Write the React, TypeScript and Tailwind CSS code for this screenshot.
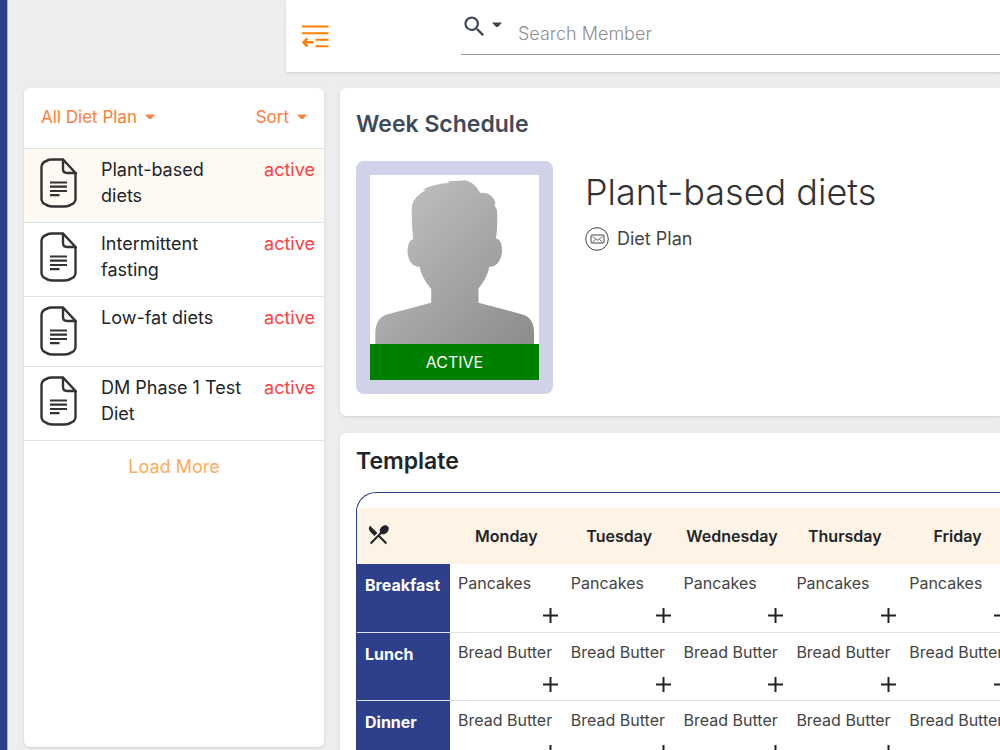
import React, { useState } from 'react';
import { MdRestaurantMenu, MdSearch } from 'react-icons/md';

const plans = [
  { name: 'Plant-based diets', status: 'active' },
  { name: 'Intermittent fasting', status: 'active' },
  { name: 'Low-fat diets', status: 'active' },
  { name: 'DM Phase 1 Test Diet', status: 'active' },
];

const days = ['Monday', 'Tuesday', 'Wednesday', 'Thursday', 'Friday'];

const meals = [
  { name: 'Breakfast', food: 'Pancakes' },
  { name: 'Lunch', food: 'Bread Butter' },
  { name: 'Dinner', food: 'Bread Butter' },
];

const Caret = () => (
  <svg width="10" height="8" viewBox="0 0 10 8" fill="currentColor" aria-hidden="true">
    <path d="M0 .5h10L6.400 4.400Q5 5.600 3.600 4.400z" />
  </svg>
);

const CollapseIcon = () => (
  <svg width="27" height="23" viewBox="0 0 27 23" fill="none" stroke="currentColor" strokeWidth="2" aria-hidden="true">
    <path d="M0 1.600h26.500M0 8.300h26.500M13.500 14.700h13M13.500 21.300h13" />
    <path d="M1 17.300h10.500M5.500 13.300l-4.200 4 4.200 4" strokeWidth="2.400" />
  </svg>
);

const DocumentIcon = () => (
  <svg className="mt-px h-[50px] w-[37px] shrink-0" viewBox="0 0 37 50" fill="none" stroke="#333" aria-hidden="true">
    <path d="M8 2.500Q1.500 4 1.500 9v32q0 4.500 6.500 6.500M29 47.500q6.500-2 6.500-6.500V15" strokeWidth="2.400" />
    <path d="M7 2.300Q9 1.500 12 1.500h11L35.500 15H27q-4 0-4-4V1.500M7 47.300q3 1.200 6 1.200h11q3 0 6-1.200" strokeWidth="2.400" />
    <path d="M10 24.500h17M10 28.700h17M10 33h17M10 37.200h9.500" strokeWidth="2.200" />
  </svg>
);

const MailIcon = () => (
  <svg width="24" height="24" viewBox="0 0 24 24" fill="none" stroke="#444" aria-hidden="true">
    <circle cx="12" cy="12" r="11.300" />
    <rect x="6" y="8" width="13" height="8" rx="1" />
    <path d="M7.500 9.500l5 3.800 5-3.800M7.500 15l3-2.500M17.500 15l-3-2.500" strokeWidth=".8" />
  </svg>
);

const Silhouette = () => (
  <svg className="block aspect-square w-full bg-white" viewBox="0 0 508 508" role="img" aria-label="Profile">
    <defs>
      <linearGradient id="shade" x1="0" y1="0" x2="1" y2="1">
        <stop offset="0" stopColor="#c4c6c5" />
        <stop offset=".55" stopColor="#a4a5a7" />
        <stop offset="1" stopColor="#8c8c8d" />
      </linearGradient>
    </defs>
    <path
      fill="url(#shade)"
      d="M16 508v-37q2-42 35-52l133-35v-41q-29-34-35-67c-20 2-36-20-36-46 0-24 7-36 17-37q-6-50-4-102 8-28 42-46l-10-1q28-17 80-21l-4-4q25 0 52-3 28 5 45 38 38-4 46 32l-3 4 8 16q2 45-3 85c12 2 18 17 18 35 0 28-17 52-38 50q-7 35-33 65v43l133 35q33 10 34 52v37z"
    />
  </svg>
);

const App = () => {
  const [selected, setSelected] = useState(0);

  return (
    <div className="flex h-screen overflow-hidden bg-[#ededed] font-['Inter',sans-serif] text-[#212529]">
      <div className="w-2 shrink-0 border-r border-[#a9b0d4] bg-[#2e3f8c]" />

      <div className="flex min-w-0 flex-1 flex-col">
        <header className="ml-[278px] flex h-[72px] shrink-0 bg-white pl-4 shadow">
          <button type="button" aria-label="Collapse menu" className="self-center text-[#ff7f00]">
            <CollapseIcon />
          </button>
          <div className="ml-[132px] flex h-[55px] flex-1 border-b border-[#9a9a9a]">
            <button type="button" aria-label="Search type" className="flex h-[52px] items-center gap-1 text-[#3d4755]">
              <MdSearch size={27} />
              <Caret />
            </button>
            <input
              type="text"
              aria-label="Search Member"
              placeholder="Search Member"
              className="ml-4 mt-3 h-[42px] min-w-0 flex-1 text-lg font-light outline-none placeholder:text-[#8f8f8f]"
            />
          </div>
        </header>

        <div className="flex min-h-0 flex-1 gap-4 pl-4 pt-4">
          <aside className="mb-[3px] w-[300px] shrink-0 rounded-md bg-white shadow">
            <div className="flex h-[61px] items-center justify-between border-b border-[#dee2e6] px-[17px] text-[17px] text-[#fd7e3b]">
              <button type="button" className="flex items-center gap-2">
                All Diet Plan <Caret />
              </button>
              <button type="button" className="flex items-center gap-2">
                Sort <Caret />
              </button>
            </div>
            <ul>
              {plans.map((plan, index) => (
                <li key={plan.name} className="border-b border-[#dee2e6]">
                  <button
                    type="button"
                    onClick={() => setSelected(index)}
                    className={`flex w-full items-start pb-[10px] pl-4 pr-[9px] pt-2 text-left text-lg leading-[26px] ${
                      selected === index ? 'bg-[#fff9f3]' : 'bg-white'
                    }`}
                  >
                    <DocumentIcon />
                    <span className="ml-6 w-[144px] pb-[3px]">{plan.name}</span>
                    <span className="ml-auto text-[#ff4141]">{plan.status}</span>
                  </button>
                </li>
              ))}
            </ul>
            <button type="button" className="mt-[13px] block w-full text-center text-lg leading-[26px] text-[#ffab5e]">
              Load More
            </button>
          </aside>

          <main className="min-w-0 flex-1">
            <section className="h-[328px] rounded-l-md bg-white pl-4 pt-5 shadow">
              <h2 className="text-[23px] font-semibold leading-8 text-[#3f4a5a]">Week Schedule</h2>
              <div className="mt-[21px] flex gap-8">
                <div className="w-[197px] shrink-0 rounded-lg bg-[#d0d3e7] p-[14px]">
                  <Silhouette />
                  <div className="bg-[#008000] text-center text-base leading-9 text-white">ACTIVE</div>
                </div>
                <div className="pt-2">
                  <h1 className="text-4xl font-light leading-[46px] text-[#333]">Plant-based diets</h1>
                  <p className="mt-3 flex items-center gap-2 text-lg leading-6 text-[#444]">
                    <MailIcon />
                    Diet Plan
                  </p>
                </div>
              </div>
            </section>

            <section className="mt-[17px] rounded-l-md bg-white pl-4 pt-3 shadow">
              <h2 className="text-[23px] font-semibold leading-8">Template</h2>
              <div className="mt-[15px] overflow-hidden rounded-tl-[20px] border-l border-t border-[#2e3f8c] pt-[15px]">
                <table className="w-[657px] table-fixed border-collapse">
                  <thead>
                    <tr className="h-14 bg-[#fff3e6] text-base">
                      <th className="w-[93px] pb-1 pl-[9px]" aria-label="Meal">
                        <MdRestaurantMenu size={25} className="block" />
                      </th>
                      {days.map((day) => (
                        <th key={day} scope="col" className="font-semibold">
                          {day}
                        </th>
                      ))}
                    </tr>
                  </thead>
                  <tbody>
                    {meals.map((meal) => (
                      <tr key={meal.name} className="h-[68px] border-b border-[#dee2e6] align-top">
                        <th
                          scope="row"
                          className="bg-[#2e3f8c] pl-2 pt-[9px] text-left text-base font-bold leading-6 text-white"
                        >
                          {meal.name}
                        </th>
                        {days.map((day) => (
                          <td key={day} className="whitespace-nowrap pl-2 pt-2 text-base leading-[22px] text-[#444]">
                            {meal.food}
                            <button
                              type="button"
                              aria-label={`Add ${meal.name} on ${day}`}
                              className="ml-auto mr-1 mt-[13px] block text-[#222]"
                            >
                              <svg width="17" height="17" viewBox="0 0 17 17" stroke="currentColor" strokeWidth="2">
                                <path d="M8.500 1v15M1 8.500h15" />
                              </svg>
                            </button>
                          </td>
                        ))}
                      </tr>
                    ))}
                  </tbody>
                </table>
              </div>
            </section>
          </main>
        </div>
      </div>
    </div>
  );
};

export default App;
